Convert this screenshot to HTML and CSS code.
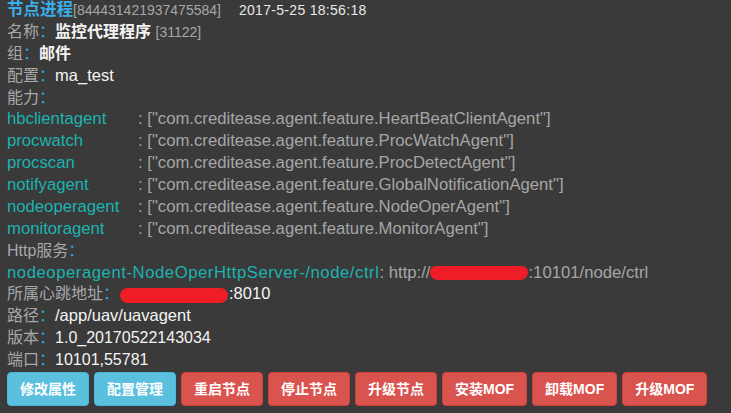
FILE: index.html
```html
<!DOCTYPE html>
<html lang="zh">
<head>
<meta charset="utf-8">
<link rel="stylesheet" href="styles.css">
</head>
<body>
<div class="panel">
  <div class="row"><span class="title">节点进程</span><span class="small gray">[844431421937475584]</span><span class="small date">2017-5-25 18:56:18</span></div>
  <div class="row"><span class="lbl">名称<span class="colon">：</span></span><span class="val strong">监控代理程序</span> <span class="small gray">[31122]</span></div>
  <div class="row"><span class="lbl">组<span class="colon">：</span></span><span class="val strong">邮件</span></div>
  <div class="row"><span class="lbl">配置<span class="colon">：</span></span><span class="val latin">ma_test</span></div>
  <div class="row"><span class="lbl">能力<span class="colon">：</span></span></div>
  <div class="row cap"><span class="key">hbclientagent</span><span class="gray">: ["com.creditease.agent.feature.HeartBeatClientAgent"]</span></div>
  <div class="row cap"><span class="key">procwatch</span><span class="gray">: ["com.creditease.agent.feature.ProcWatchAgent"]</span></div>
  <div class="row cap"><span class="key">procscan</span><span class="gray">: ["com.creditease.agent.feature.ProcDetectAgent"]</span></div>
  <div class="row cap"><span class="key">notifyagent</span><span class="gray">: ["com.creditease.agent.feature.GlobalNotificationAgent"]</span></div>
  <div class="row cap"><span class="key">nodeoperagent</span><span class="gray">: ["com.creditease.agent.feature.NodeOperAgent"]</span></div>
  <div class="row cap"><span class="key">monitoragent</span><span class="gray">: ["com.creditease.agent.feature.MonitorAgent"]</span></div>
  <div class="row"><span class="lbl">Http服务<span class="colon">：</span></span></div>
  <div class="row cap"><span class="teal server">nodeoperagent-NodeOperHttpServer-/node/ctrl</span><span class="gray">: http://<span class="redact redact-url"></span>:10101/node/ctrl</span></div>
  <div class="row"><span class="lbl">所属心跳地址<span class="colon">：</span></span><span class="redact redact-hb"></span><span class="val latin">:8010</span></div>
  <div class="row"><span class="lbl">路径<span class="colon">：</span></span><span class="val latin">/app/uav/uavagent</span></div>
  <div class="row"><span class="lbl">版本<span class="colon">：</span></span><span class="val">1.0_20170522143034</span></div>
  <div class="row"><span class="lbl">端口<span class="colon">：</span></span><span class="val">10101,55781</span></div>
  <div class="actions">
    <button class="btn btn-info">修改属性</button>
    <button class="btn btn-info">配置管理</button>
    <button class="btn btn-danger">重启节点</button>
    <button class="btn btn-danger">停止节点</button>
    <button class="btn btn-danger">升级节点</button>
    <button class="btn btn-danger">安装MOF</button>
    <button class="btn btn-danger">卸载MOF</button>
    <button class="btn btn-danger">升级MOF</button>
  </div>
</div>
</body>
</html>
```

FILE: styles.css
```css
html, body {
  margin: 0;
  padding: 0;
  background: #3a3a3a;
}
body {
  font-family: "Liberation Sans", "Noto Sans CJK SC", sans-serif;
  font-size: 16px;
  color: #a8a8a8;
}
.panel {
  padding: 0 0 0 7px;
  margin-top: -1px;
}
.row {
  height: 21.875px;
  line-height: 21.875px;
  white-space: nowrap;
}
.title {
  color: #3aaee8;
  font-weight: bold;
  font-size: 16.5px;
}
.small {
  font-size: 14px;
}
.gray {
  color: #a6a6a6;
}
.date {
  color: #e8e8e8;
  margin-left: 18px;
  letter-spacing: 0.3px;
}
.lbl {
  color: #a8a8a8;
}
.colon {
  color: #2fa3dc;
}
.val {
  color: #f4f4f4;
}
.latin {
  font-size: 16.5px;
}
.strong {
  font-weight: bold;
}
.cap {
  font-size: 16.7px;
}
.key {
  display: inline-block;
  width: 131px;
  color: #1cb3b0;
}
.teal {
  color: #1cb3b0;
}
.server {
  letter-spacing: 0.55px;
}
.redact {
  display: inline-block;
  background: #ee1d26;
  vertical-align: middle;
}
.redact-url {
  width: 98px;
  height: 14px;
  border-radius: 7px 7px 9px 9px;
  margin-top: -1px;
}
.redact-hb {
  width: 108px;
  height: 15px;
  border-radius: 8px;
  margin-left: 1px;
  margin-right: 1px;
}
.actions {
  display: flex;
  gap: 5px;
  margin-top: 1px;
}
.btn {
  font-family: "Liberation Sans", "Noto Sans CJK SC", sans-serif;
  font-size: 14px;
  font-weight: bold;
  line-height: 20px;
  padding: 6px 12px;
  border-radius: 4px;
  border: 1px solid transparent;
  color: #fff;
  cursor: pointer;
}
.btn-info {
  background: #5bc0de;
  border-color: #46b8da;
}
.btn-danger {
  background: #d9534f;
  border-color: #d43f3a;
}
```
